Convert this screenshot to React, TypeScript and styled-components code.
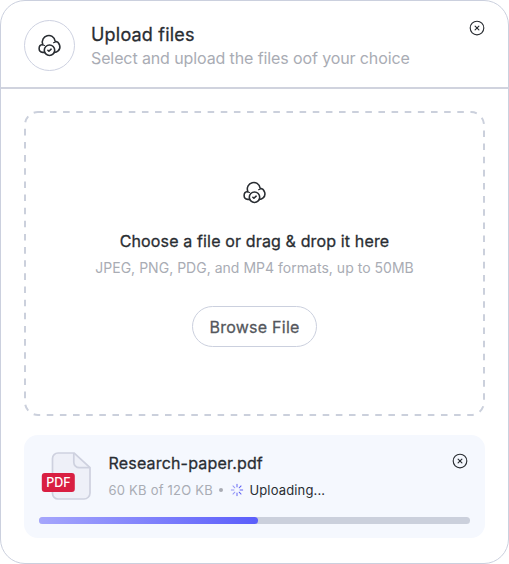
import React from 'react';
import styled, { createGlobalStyle } from 'styled-components';

const Global = createGlobalStyle`
  * { box-sizing: border-box; }
  body { margin: 0; background: #fff; font-family: Inter, "Liberation Sans", sans-serif; }
  button { font-family: inherit; }
`;

const Dialog = styled.main`
  display: flex;
  flex-direction: column;
  width: 509px;
  height: 564px;
  border: 1px solid #cbd0de;
  border-radius: 25px;
  background: #fff;
  overflow: hidden;
`;

const Header = styled.header`
  display: flex;
  align-items: flex-start;
  height: 88px;
  padding: 19px 23.5px 0 23px;
  border-bottom: 2px solid #d0d3de;
`;

const IconRing = styled.div`
  display: grid;
  place-items: center;
  flex: none;
  width: 51px;
  height: 51px;
  padding-right: 1px;
  border: 1px solid #cdd1e0;
  border-radius: 50%;
`;

const Heading = styled.div`
  flex: 1;
  padding: 3px 0 0 16px;
`;

const Line = styled.p<{ $size: number; $height: number; $color?: string; $strong?: boolean; $spacing?: number }>`
  margin: 0;
  width: max-content;
  font-size: ${p => p.$size}px;
  line-height: ${p => p.$height}px;
  font-weight: 400;
  color: ${p => p.$color ?? '#292d32'};
  letter-spacing: ${p => p.$spacing ?? 0}px;
  -webkit-text-stroke: ${p => (p.$strong ? '0.28px currentColor' : '0')};
  white-space: nowrap;
`;

const CloseButton = styled.button<{ $top?: number; $right?: number }>`
  display: flex;
  flex: none;
  padding: 0;
  border: 0;
  background: none;
  margin: ${p => p.$top ?? 0}px ${p => p.$right ?? 0}px 0 0;
`;

const Content = styled.section`
  display: flex;
  flex-direction: column;
  gap: 19px;
  padding: 22px 23px 0;
`;

const DropZone = styled.div`
  position: relative;
  display: flex;
  flex-direction: column;
  align-items: center;
  height: 305px;
  padding-top: 69px;
`;

const DashedOutline = styled.svg`
  position: absolute;
  inset: 0;
  width: 100%;
  height: 100%;
  pointer-events: none;
`;

const DropText = styled.div`
  display: flex;
  flex-direction: column;
  align-items: center;
  gap: 4px;
  margin: 25px 0 27px;
`;

const BrowseButton = styled.button`
  display: grid;
  place-items: center;
  width: 125px;
  height: 41px;
  padding: 0;
  border: 1px solid #cbd0de;
  border-radius: 21px;
  background: #fff;
`;

const FileCard = styled.article`
  display: flex;
  flex-direction: column;
  height: 103px;
  padding: 16px 15px 0 14.5px;
  border-radius: 14px;
  background: #f5f8fe;
`;

const FileRow = styled.div`
  display: flex;
  align-items: flex-start;
  height: 66px;
`;

const FileInfo = styled.div`
  flex: 1;
  padding-left: 17px;
`;

const Status = styled.div`
  display: flex;
  align-items: center;
  margin-top: 5px;
`;

const Dot = styled.span`
  width: 4px;
  height: 4px;
  margin: 0 7.5px 0 6px;
  border-radius: 50%;
  background: #a9acb4;
`;

const Track = styled.div`
  height: 7px;
  width: 431.5px;
  border-radius: 4px;
  background: #cbd0dc;
`;

const Fill = styled.div`
  height: 100%;
  border-radius: 4px;
  background: linear-gradient(90deg, #a5a6fc, #5b5efb);
`;

const Spinner = styled.svg`
  margin-right: 5px;
`;

function CloudCheck() {
  return (
    <svg width="25" height="25" viewBox="0 0 24 24" fill="none" stroke="#292d32" strokeWidth="1.5" strokeLinecap="round" strokeLinejoin="round">
      <circle cx="12" cy="16.53" r="5" />
      <path d="m10.44 16.53.99.99 2.13-1.97" />
      <path d="M5.54 11.12c-4.68.33-4.68 7.14 0 7.47h1.92M5.59 11.12C2.38 2.19 15.92-1.38 17.47 8c4.33.55 6.08 6.32 2.8 9.19-1 .91-2.29 1.41-3.64 1.4h-.09" />
      <path d="M7.26 12c-.53-.35-1.15-.54-1.73-.54M15.82 9.37c.53-.26 1.1-.4 1.69-.41" strokeWidth="1" />
    </svg>
  );
}

function CloseIcon() {
  return (
    <svg width="16" height="16" viewBox="0 0 16 16" fill="none" stroke="#292d32" strokeWidth="1.15" strokeLinecap="round">
      <circle cx="8" cy="8" r="6.8" />
      <path d="m6.1 6.1 3.8 3.8m0-3.8L6.1 9.9" />
    </svg>
  );
}

function PdfIcon() {
  return (
    <svg width="53" height="50" viewBox="0 0 53 50">
      <path d="M19 2h16.2L51 16.5V42a6 6 0 0 1-6 6H19a5.5 5.5 0 0 1-5.5-5.5v-35A5.5 5.5 0 0 1 19 2Z" fill="#eef0f8" stroke="#ced1df" strokeWidth="1.7" />
      <path d="M34.8 2v9.2a5.5 5.5 0 0 0 5.5 5.5H51" fill="none" stroke="#ced1df" strokeWidth="1.7" />
      <rect x="2.8" y="22" width="33" height="19" rx="3" fill="#d91f42" />
      <text x="7.2" y="36" fill="#fff" fontFamily="Inter, sans-serif" fontSize="12.5" fontWeight="500" textLength="24.5">PDF</text>
    </svg>
  );
}

function LoadingIcon() {
  return (
    <Spinner width="14" height="14" viewBox="0 0 14 14" stroke="#6264f4" strokeLinecap="round">
      {[0, 45, 90, 135, 180, 225, 270, 315].map((angle, i) => (
        <path key={angle} d="M7 1.3v2.6" transform={`rotate(${angle} 7 7)`} opacity={i > 4 ? 0.65 : 1} />
      ))}
    </Spinner>
  );
}

export default function App() {
  const progress = 50.8;
  return (
    <>
      <Global />
      <Dialog>
        <Header>
          <IconRing><CloudCheck /></IconRing>
          <Heading>
            <Line $size={18} $height={24} $strong $spacing={0.2}>Upload files</Line>
            <Line $size={16} $height={22} $color="#a9acb4" $spacing={-0.11}>Select and upload the files oof your choice</Line>
          </Heading>
          <CloseButton aria-label="Close"><CloseIcon /></CloseButton>
        </Header>
        <Content>
          <DropZone>
            <DashedOutline aria-hidden="true">
              <rect x="1" y="1" width="459" height="303" rx="13" fill="none" stroke="#cbd0dc" strokeWidth="2" strokeDasharray="6.57 6.57" strokeDashoffset="1.2" />
            </DashedOutline>
            <CloudCheck />
            <DropText>
              <Line $size={16} $height={23} $strong $spacing={0.14}>Choose a file or drag &amp; drop it here</Line>
              <Line $size={14} $height={22} $color="#a9acb4" $spacing={0.02}>JPEG, PNG, PDG, and MP4 formats, up to 50MB</Line>
            </DropText>
            <BrowseButton>
              <Line as="span" $size={16} $height={22} $strong $color="#54575c" $spacing={0.25}>Browse File</Line>
            </BrowseButton>
          </DropZone>
          <FileCard>
            <FileRow>
              <PdfIcon />
              <FileInfo>
                <Line $size={16} $height={24} $strong $spacing={0.18}>Research-paper.pdf</Line>
                <Status>
                  <Line as="span" $size={13} $height={20} $color="#a9acb4" $spacing={0.22}>60 KB of 12O KB</Line>
                  <Dot />
                  <LoadingIcon />
                  <Line as="span" $size={13} $height={20} $spacing={0.15}>Uploading...</Line>
                </Status>
              </FileInfo>
              <CloseButton aria-label="Cancel upload" $top={2} $right={2}><CloseIcon /></CloseButton>
            </FileRow>
            <Track><Fill style={{ width: `${progress}%` }} /></Track>
          </FileCard>
        </Content>
      </Dialog>
    </>
  );
}
